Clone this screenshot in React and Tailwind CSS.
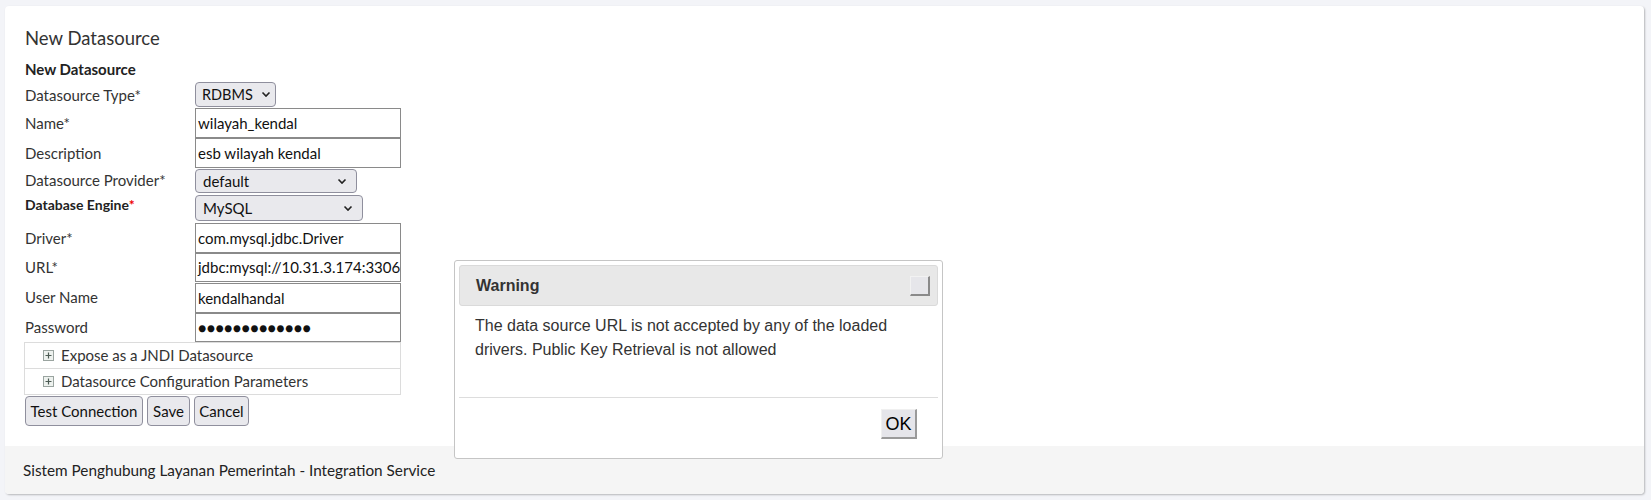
import React from 'react';

const font = { fontFamily: 'Lato, "Noto Sans", sans-serif' };

const Label = ({ children, bold }) => (
  <div className={bold ? 'w-[170px] text-[14px] font-bold text-[#222] pt-[1px]' : 'w-[170px] text-[15px] text-[#333]'}>
    {children}
  </div>
);

const Select = ({ value, w, h, cls = 'pl-[7px] pr-[9px] text-[15px]' }) => (
  <div className={`flex items-center justify-between gap-[8px] bg-[#e9e9ed] border border-[#8f8f9d] rounded-[4px] text-[#111] ${cls} ${w} ${h}`}>
    <span>{value}</span>
    <svg width="10" height="7" viewBox="0 0 10 7" fill="none" stroke="#222" strokeWidth="1.6" className="shrink-0">
      <path d="M1.5 1.5 L5 5 L8.5 1.5" />
    </svg>
  </div>
);

const Input = ({ value, h = 'h-[30px]' }) => (
  <div className={`w-[206px] ${h} border border-[#8a8a8a] bg-white flex items-center px-[2px] text-[15px] text-[#111] overflow-hidden whitespace-nowrap`}>
    {value}
  </div>
);

const Row = ({ label, bold, children, cls = 'items-center' }) => (
  <div className={`flex ${cls}`}>
    <Label bold={bold}>{label}</Label>
    {children}
  </div>
);

const PlusBox = () => (
  <span className="w-[11px] h-[11px] border border-[#9aa4a0] bg-[#eef2ef] flex items-center justify-center">
    <svg width="7" height="7" viewBox="0 0 7 7" stroke="#4d5b54" strokeWidth="1.2">
      <path d="M3.5 0.5 V6.5 M0.5 3.5 H6.5" />
    </svg>
  </span>
);

const Btn = ({ children, w }) => (
  <button className={`h-[30px] ${w} bg-[#e9e9ed] border border-[#8f8f9d] rounded-[4px] text-[15px] text-[#111]`}>{children}</button>
);

export default function App() {
  return (
    <div className="w-[1651px] h-[500px] bg-[#f3f4f8] pt-[6px] pl-[5px] relative" style={font}>
      <div className="w-[1639px] h-[488px] bg-white rounded-[4px] shadow-[1px_1px_2px_rgba(0,0,0,0.25)] flex flex-col overflow-hidden">
        <div className="flex-1 pl-[20px] pt-[21px]">
          <div className="text-[18.5px] text-[#333] leading-[22px]">New Datasource</div>
          <div className="mt-[12px] text-[15px] font-bold text-[#222] leading-[17px]">New Datasource</div>
          <div className="flex flex-col mt-[4px]">
            <Row label="Datasource Type*">
              <div className="mb-[1px]">
                <Select value="RDBMS" w="w-[81px]" h="h-[25px]" cls="pl-[6px] pr-[8px] text-[14.5px] gap-[6px]" />
              </div>
            </Row>
            <Row label="Name*"><Input value="wilayah_kendal" /></Row>
            <Row label="Description"><Input value="esb wilayah kendal" /></Row>
            <Row label="Datasource Provider*">
              <div className="mt-[1px]"><Select value="default" w="w-[162px]" h="h-[24px]" /></div>
            </Row>
            <Row label={<>Database Engine<span className="text-[#e00]">*</span></>} bold cls="items-start">
              <div className="mt-[2px]"><Select value="MySQL" w="w-[168px]" h="h-[26px]" /></div>
            </Row>
            <div className="h-[2px]" />
            <Row label="Driver*"><Input value="com.mysql.jdbc.Driver" /></Row>
            <Row label="URL*"><Input value="jdbc:mysql://10.31.3.174:3306" h="h-[29px]" /></Row>
            <Row label="User Name"><div className="mt-[1px]"><Input value="kendalhandal" /></div></Row>
            <Row label="Password"><Input value={<span className="text-[14px] tracking-[0.3px]">●●●●●●●●●●●●●</span>} h="h-[29px]" /></Row>
            <div className="w-[377px] border border-[#dcdcdc] -ml-[1px]">
              <div className="h-[26px] flex items-center gap-[7px] pl-[18px] border-b border-[#dcdcdc] text-[15px] text-[#333]">
                <PlusBox />Expose as a JNDI Datasource
              </div>
              <div className="h-[25px] flex items-center gap-[7px] pl-[18px] text-[15px] text-[#333]">
                <PlusBox />Datasource Configuration Parameters
              </div>
            </div>
            <div className="flex gap-[4px] mt-[1px]">
              <Btn w="w-[118px]">Test Connection</Btn>
              <Btn w="w-[43px]">Save</Btn>
              <Btn w="w-[55px]">Cancel</Btn>
            </div>
          </div>
        </div>
        <div className="h-[48px] bg-[#f5f5f5] flex items-center pl-[18px] text-[15.3px] text-[#222]">
          Sistem Penghubung Layanan Pemerintah - Integration Service
        </div>
      </div>

      <div
        className="absolute left-[454px] top-[260px] w-[489px] h-[199px] bg-white border border-[#c5c5c5] rounded-[3px] p-[4px] flex flex-col"
        style={{ fontFamily: '"Liberation Sans", Arial, sans-serif' }}
      >
        <div className="h-[41px] bg-[#e8e8e8] border border-[#dadada] rounded-[3px] flex items-center justify-between pl-[16px] pr-[7px]">
          <span className="text-[16px] font-bold text-[#333]">Warning</span>
          <span className="w-[20px] h-[20px] bg-[#e6e6ea] border-t border-l border-[#f2f2f2] border-r-2 border-b-2 border-r-[#8a8a8a] border-b-[#8a8a8a]" />
        </div>
        <div className="px-[16px] pt-[8px] text-[16px] leading-[24px] text-[#333] h-[91px]">
          The data source URL is not accepted by any of the loaded drivers. Public Key Retrieval is not allowed
        </div>
        <div className="border-t border-[#dddddd]" />
        <div className="flex justify-end pr-[21px] pt-[11px]">
          <button className="w-[36px] h-[30px] bg-[#e5e5ea] border-t border-l border-[#f0f0f0] border-r-2 border-b-2 border-r-[#9a9a9a] border-b-[#9a9a9a] text-[18px] text-black leading-none">
            OK
          </button>
        </div>
      </div>
    </div>
  );
}
